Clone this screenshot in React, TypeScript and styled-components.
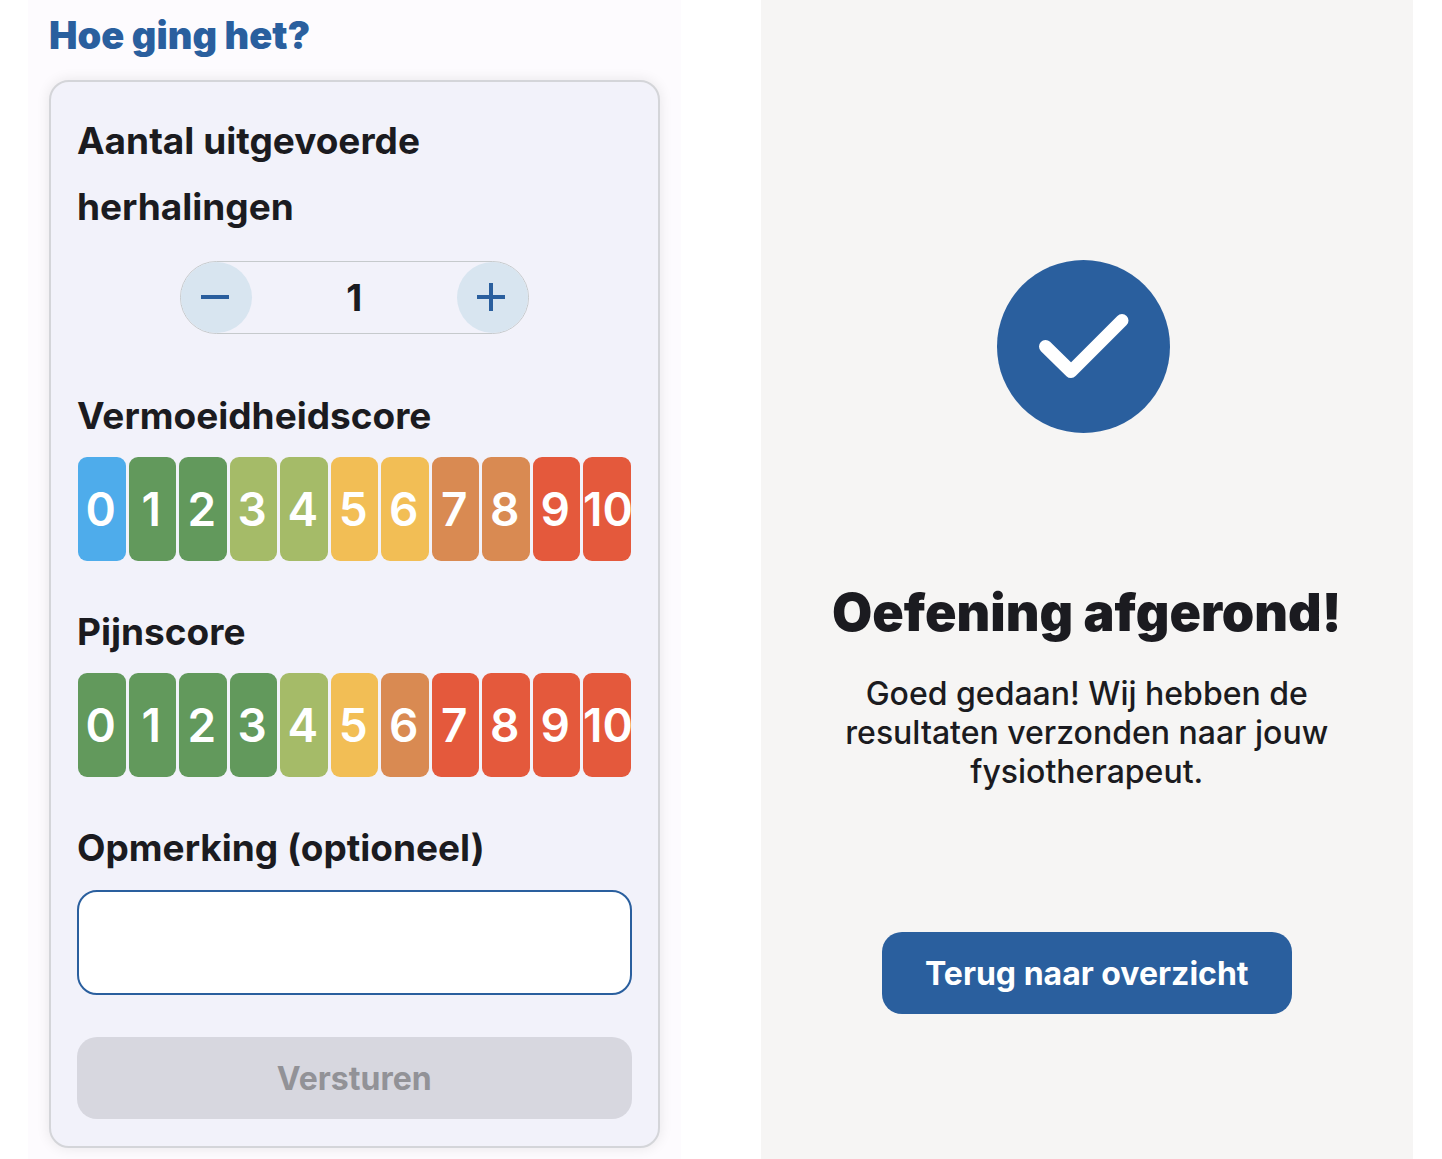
import React, { useState } from "react";
import styled, { createGlobalStyle } from "styled-components";

const colors = {
  blue: "#2a5f9e",
  ink: "#1b1b20",
  sky: "#4eaceb",
  green: "#62995c",
  lime: "#a5bb68",
  yellow: "#f2be55",
  orange: "#d98a52",
  red: "#e4593c",
};

const { sky, green, lime, yellow, orange, red } = colors;
const fatigueScale = [sky, green, green, lime, lime, yellow, yellow, orange, orange, red, red];
const painScale = [green, green, green, green, lime, yellow, orange, red, red, red, red];

const GlobalStyle = createGlobalStyle`
  *, *::before, *::after { box-sizing: border-box; }
  body {
    margin: 0;
    background: #ffffff;
    color: ${colors.ink};
    font-family: Inter, "Liberation Sans", sans-serif;
  }
  button, input { font: inherit; }
`;

const Page = styled.div`
  display: grid;
  grid-template-columns: 1fr 1fr;
  gap: 80px;
  min-height: 100vh;
  padding: 0 29px 0 28px;
`;

const FormPanel = styled.main`
  padding: 10px 21px;
  background: #fdfbfe;
`;

const FormTitle = styled.h1`
  margin: 0 0 20px;
  color: ${colors.blue};
  font-size: 38px;
  font-weight: 900;
  line-height: 50px;
`;

const Card = styled.form`
  display: flex;
  flex-direction: column;
  padding: 26px 26px 27px;
  border: 2px solid #d4d5d9;
  border-radius: 20px;
  background: #f2f2fa;
  box-shadow: 0 0 14px rgba(0, 0, 0, 0.09);
`;

const Label = styled.label`
  max-width: 420px;
  font-size: 37px;
  font-weight: 700;
  line-height: 66px;
`;

const Stepper = styled.div`
  display: flex;
  align-items: center;
  justify-content: space-between;
  align-self: center;
  width: 349px;
  height: 73px;
  margin: 21px 0 49px;
  border: 1px solid #c6cacc;
  border-radius: 37px;
`;

const StepButton = styled.button`
  display: grid;
  place-items: center;
  width: 71px;
  height: 71px;
  padding: 0 2px 2px 0;
  border: 0;
  border-radius: 50%;
  background: #d8e5f0;
  color: ${colors.blue};
`;

const Count = styled.output`
  font-size: 37px;
  font-weight: 700;
`;

const ScoreGroup = styled.fieldset`
  min-width: 0;
  margin: 0 0 38px;
  padding: 0;
  border: 0;
`;

const Legend = styled.legend`
  padding: 0 0 8px;
  font-size: 37px;
  font-weight: 700;
  line-height: 66px;
`;

const Scale = styled.div`
  display: grid;
  grid-template-columns: repeat(11, minmax(0, 1fr));
  gap: 3px;
  padding: 0 1px;
`;

const Score = styled.button<{ $color: string }>`
  display: flex;
  align-items: center;
  justify-content: safe center;
  height: 104px;
  padding: 0 2px 0 0;
  border: 0;
  border-radius: 9px;
  background: ${({ $color }) => $color};
  color: #ffffff;
  font-size: 46px;
  font-weight: 600;
`;

const Remark = styled.input`
  width: 100%;
  height: 105px;
  margin: 9px 0 42px;
  padding: 0 24px;
  border: 2px solid ${colors.blue};
  border-radius: 20px;
  background: #ffffff;
  font-size: 32px;
`;

const Action = styled.button`
  height: 82px;
  padding: 0 43px;
  border: 0;
  border-radius: 20px;
  background: ${colors.blue};
  color: #ffffff;
  font-size: 32px;
  font-weight: 700;

  &:disabled {
    background: #d7d7df;
    color: #929297;
  }
`;

const DonePanel = styled.section`
  display: flex;
  flex-direction: column;
  align-items: center;
  padding: 260px 60px 0;
  background: #f6f5f4;
`;

const CheckBadge = styled.svg`
  width: 180px;
  height: 173px;
`;

const DoneTitle = styled.h2`
  margin: 148px 0 29px;
  font-size: 52px;
  font-weight: 900;
  line-height: 64px;
  white-space: nowrap;
`;

const DoneText = styled.p`
  max-width: 500px;
  margin: 0 0 141px;
  font-size: 32px;
  font-weight: 500;
  line-height: 39px;
  text-align: center;
`;

type ScaleProps = { title: string; scale: string[] };

function ScoreScale({ title, scale }: ScaleProps) {
  return (
    <ScoreGroup>
      <Legend>{title}</Legend>
      <Scale>
        {scale.map((color, value) => (
          <Score key={value} type="button" $color={color}>
            {value}
          </Score>
        ))}
      </Scale>
    </ScoreGroup>
  );
}

export default function App() {
  const [count, setCount] = useState(1);
  return (
    <>
      <GlobalStyle />
      <Page>
        <FormPanel>
          <FormTitle>Hoe ging het?</FormTitle>
          <Card onSubmit={(event) => event.preventDefault()}>
            <Label htmlFor="count">Aantal uitgevoerde herhalingen</Label>
            <Stepper>
              <StepButton type="button" aria-label="Minder" onClick={() => setCount(Math.max(0, count - 1))}>
                <svg width="28" height="28" viewBox="0 0 28 28" fill="none" stroke="currentColor" strokeWidth="4">
                  <path d="M0 14H28" />
                </svg>
              </StepButton>
              <Count id="count">{count}</Count>
              <StepButton type="button" aria-label="Meer" onClick={() => setCount(count + 1)}>
                <svg width="28" height="28" viewBox="0 0 28 28" fill="none" stroke="currentColor" strokeWidth="4">
                  <path d="M0 14H28M14 0V28" />
                </svg>
              </StepButton>
            </Stepper>
            <ScoreScale title="Vermoeidheidscore" scale={fatigueScale} />
            <ScoreScale title="Pijnscore" scale={painScale} />
            <Label htmlFor="remark">Opmerking (optioneel)</Label>
            <Remark id="remark" type="text" />
            <Action type="submit" disabled>
              Versturen
            </Action>
          </Card>
        </FormPanel>
        <DonePanel>
          <CheckBadge viewBox="0 0 180 173" aria-hidden="true">
            <circle cx="86.5" cy="86.5" r="86.5" fill={colors.blue} />
            <path
              d="M48.5 86.5L74 111.5L125 60.5"
              fill="none"
              stroke="#ffffff"
              strokeWidth="13"
              strokeLinecap="round"
              strokeLinejoin="round"
            />
          </CheckBadge>
          <DoneTitle>Oefening afgerond!</DoneTitle>
          <DoneText>Goed gedaan! Wij hebben de resultaten verzonden naar jouw fysiotherapeut.</DoneText>
          <Action type="button">Terug naar overzicht</Action>
        </DonePanel>
      </Page>
    </>
  );
}
